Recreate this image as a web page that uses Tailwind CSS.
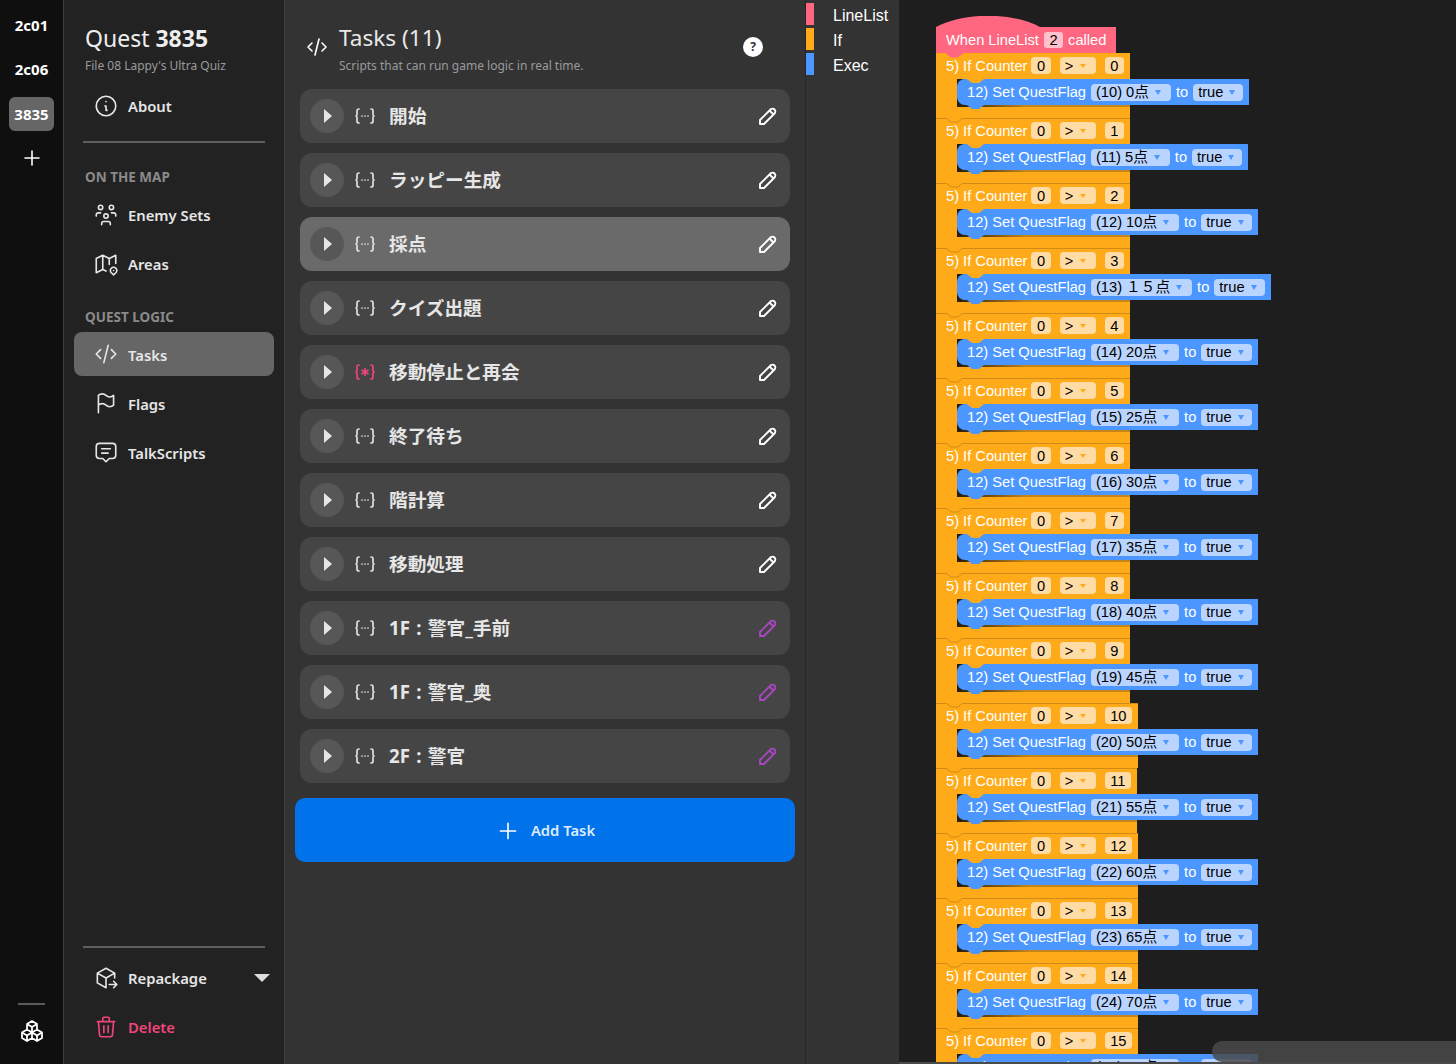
<!DOCTYPE html>
<html lang="ja">

<head>
    <meta charset="UTF-8">
    <title>Quest 3835</title>
    <script src="https://cdn.jsdelivr.net/npm/@tailwindcss/browser@4"></script>
</head>

<body class="bg-[#1e1e1e] overflow-hidden">

<!-- Icon sprites -->
<svg class="hidden">
    <symbol id="i-info" viewBox="0 0 24 24"><path d="M3 12a9 9 0 1 0 18 0a9 9 0 0 0 -18 0M12 8h.01M11 12h1v4h1"/></symbol>
    <symbol id="i-users" viewBox="0 0 24 24"><path d="M10 13a2 2 0 1 0 4 0a2 2 0 0 0 -4 0M8 21v-1a2 2 0 0 1 2 -2h4a2 2 0 0 1 2 2v1M15 5a2 2 0 1 0 4 0a2 2 0 0 0 -4 0M17 10h2a2 2 0 0 1 2 2v1M5 5a2 2 0 1 0 4 0a2 2 0 0 0 -4 0M3 13v-1a2 2 0 0 1 2 -2h2"/></symbol>
    <symbol id="i-map" viewBox="0 0 24 24"><path d="M12 18.5l-3 -1.5l-6 3v-13l6 -3l6 3l6 -3v7.5M9 4v13M15 7v5.5M21.121 20.121a3 3 0 1 0 -4.242 0c.418 .419 1.125 1.045 2.121 1.879c1.051 -.89 1.759 -1.516 2.121 -1.879zM19 18v.01"/></symbol>
    <symbol id="i-code" viewBox="0 0 24 24"><path d="M7 8l-4 4l4 4M17 8l4 4l-4 4M14 4l-4 16"/></symbol>
    <symbol id="i-flag" viewBox="0 0 24 24"><path d="M5 5a5 5 0 0 1 7 0a5 5 0 0 0 7 0v9a5 5 0 0 1 -7 0a5 5 0 0 0 -7 0v-9zM5 21v-7"/></symbol>
    <symbol id="i-message" viewBox="0 0 24 24"><path d="M8 9h8M8 13h6M9 18h-3a3 3 0 0 1 -3 -3v-8a3 3 0 0 1 3 -3h12a3 3 0 0 1 3 3v8a3 3 0 0 1 -3 3h-3l-3 3l-3 -3z"/></symbol>
    <symbol id="i-package" viewBox="0 0 24 24"><path d="M12 21l-8 -4.5v-9l8 -4.5l8 4.5v4.5M12 12l8 -4.5M12 12v9M12 12l-8 -4.5M15 18h7M19 15l3 3l-3 3"/></symbol>
    <symbol id="i-trash" viewBox="0 0 24 24"><path d="M4 7h16M10 11v6M14 11v6M5 7l1 12a2 2 0 0 0 2 2h8a2 2 0 0 0 2 -2l1 -12M9 7v-3a1 1 0 0 1 1 -1h4a1 1 0 0 1 1 1v3"/></symbol>
    <symbol id="i-packages" viewBox="0 0 24 24"><path d="M7 16.5l-5 -3l5 -3l5 3v5.5l-5 3zM2 13.5v5.5l5 3M7 16.545l5 -3.03M17 16.5l-5 -3l5 -3l5 3v5.5l-5 3zM12 19l5 3M17 16.5l5 -3M12 13.5v-5.5l-5 -3l5 -3l5 3v5.5M7 5.03v5.455M12 8l5 -3"/></symbol>
    <symbol id="i-plus" viewBox="0 0 24 24"><path d="M12 5v14M5 12h14"/></symbol>
    <symbol id="i-pencil" viewBox="0 0 24 24"><path d="M4 20h4l10.5 -10.5a2.828 2.828 0 1 0 -4 -4l-10.5 10.5v4M13.5 6.5l4 4"/></symbol>
    <symbol id="i-dots" viewBox="0 0 24 24"><path d="M15 12h.01M12 12h.01M9 12h.01M6 19a2 2 0 0 1 -2 -2v-4l-1 -1l1 -1v-4a2 2 0 0 1 2 -2M18 19a2 2 0 0 0 2 -2v-4l1 -1l-1 -1v-4a2 2 0 0 0 -2 -2"/></symbol>
    <symbol id="i-star" viewBox="0 0 24 24"><path d="M12 12l3 -1.7M12 12v3.4M12 12l-3 -1.7M12 12l3 1.7M12 8.6v3.4M12 12l-3 1.7M6 19a2 2 0 0 1 -2 -2v-4l-1 -1l1 -1v-4a2 2 0 0 1 2 -2M18 19a2 2 0 0 0 2 -2v-4l1 -1l-1 -1v-4a2 2 0 0 0 -2 -2"/></symbol>
</svg>

<div class="flex h-[1064px] w-[1456px] overflow-hidden [stroke-linecap:round] [stroke-linejoin:round] font-[family-name:'Noto_Sans','Noto_Sans_CJK_JP',sans-serif]">

    <!-- Project rail -->
    <nav class="w-[64px] shrink-0 bg-[#0f0f0f] border-r border-[#3e3e3e] flex flex-col items-center text-white text-[15px] font-bold">
        <a class="mt-[4px] h-[43px] flex items-center">2c01</a>
        <a class="h-[44px] flex items-center">2c06</a>
        <a class="w-[45px] h-[34px] mt-[6px] flex items-center justify-center rounded-md bg-[#666666]">3835</a>
        <svg class="mt-[15px] w-[24px] h-[24px] fill-none stroke-white stroke-[1.6]"><use href="#i-plus"/></svg>
        <div class="mt-auto w-[27px] h-[2px] bg-[#5a5a5a]"></div>
        <svg class="mt-[14px] mb-[21px] w-[24px] h-[24px] fill-none stroke-white stroke-[1.8]"><use href="#i-packages"/></svg>
    </nav>

    <!-- Quest sidebar -->
    <aside class="w-[221px] shrink-0 bg-[#222222] border-r border-[#3e3e3e] flex flex-col px-[10px] text-[#e6e6e6]">
        <h1 class="ml-[11px] mt-[22px] text-[23px] leading-[33px] text-[#eeeeee]">Quest <b class="font-bold">3835</b></h1>
        <p class="ml-[11px] mt-[2px] text-[12px] leading-[17px] text-[#9a9a9a]">File 08 Lappy's Ultra Quiz</p>
        <a class="mt-[10px] h-[44px] flex items-center gap-[9px] pl-[19px] text-[14.8px] font-semibold"><svg class="w-[26px] h-[26px] fill-none stroke-current stroke-[1.5]"><use href="#i-info"/></svg>About</a>
        <div class="mx-[9px] mt-[13px] h-[2px] bg-[#5f5f5f]"></div>
        <h2 class="ml-[11px] mt-[25px] text-[13.5px] leading-[18px] font-bold text-[#8a8a8a]">ON THE MAP</h2>
        <div class="mt-[7px] flex flex-col gap-[5px] text-[14.8px] font-semibold">
            <a class="h-[44px] flex items-center gap-[9px] pl-[19px]"><svg class="w-[26px] h-[26px] fill-none stroke-current stroke-[1.5]"><use href="#i-users"/></svg>Enemy Sets</a>
            <a class="h-[44px] flex items-center gap-[9px] pl-[19px]"><svg class="w-[26px] h-[26px] fill-none stroke-current stroke-[1.5]"><use href="#i-map"/></svg>Areas</a>
        </div>
        <h2 class="ml-[11px] mt-[22px] text-[13.5px] leading-[18px] font-bold text-[#8a8a8a]">QUEST LOGIC</h2>
        <div class="mt-[6px] flex flex-col gap-[5px] text-[14.8px] font-semibold">
            <a class="h-[44px] pt-[2px] flex items-center gap-[9px] pl-[19px] rounded-lg bg-[#666666]"><svg class="-mt-[2px] w-[26px] h-[26px] fill-none stroke-current stroke-[1.5]"><use href="#i-code"/></svg>Tasks</a>
            <a class="h-[44px] pt-[2px] flex items-center gap-[9px] pl-[19px]"><svg class="-mt-[2px] w-[26px] h-[26px] fill-none stroke-current stroke-[1.5]"><use href="#i-flag"/></svg>Flags</a>
            <a class="h-[44px] pt-[2px] flex items-center gap-[9px] pl-[19px]"><svg class="-mt-[2px] w-[26px] h-[26px] fill-none stroke-current stroke-[1.5]"><use href="#i-message"/></svg>TalkScripts</a>
        </div>
        <div class="mx-[9px] mt-auto h-[2px] bg-[#5f5f5f]"></div>
        <div class="mt-[8px] mb-[15px] flex flex-col gap-[5px] text-[14.8px] font-semibold">
            <a class="h-[44px] flex items-center gap-[9px] pl-[19px]"><svg class="w-[26px] h-[26px] fill-none stroke-current stroke-[1.5]"><use href="#i-package"/></svg>Repackage<span class="ml-auto mr-[4px] border-x-[8px] border-t-[8px] border-x-transparent border-t-[#dddddd]"></span></a>
            <a class="h-[44px] flex items-center gap-[9px] pl-[19px] text-[#f0457a]"><svg class="w-[26px] h-[26px] fill-none stroke-current stroke-[1.5]"><use href="#i-trash"/></svg>Delete</a>
        </div>
    </aside>

    <!-- Task list -->
    <section class="w-[521px] shrink-0 bg-[#333333] border-r border-[#262626] px-[10px]">
        <header class="h-[89px] pt-[22px] flex items-start relative">
            <svg class="ml-[10px] mt-[13px] w-[24px] h-[24px] fill-none stroke-white stroke-[1.6]"><use href="#i-code"/></svg>
            <div class="ml-[10px]">
                <h2 class="text-[22.6px] leading-[32px] text-[#e8e8e8]">Tasks (11)</h2>
                <p class="mt-[3px] text-[12px] leading-[17px] text-[#9a9a9a]">Scripts that can run game logic in real time.</p>
            </div>
            <span class="absolute left-[448px] top-[37px] w-[20px] h-[20px] rounded-full bg-white text-[#333333] text-[12px] font-bold flex items-center justify-center">?</span>
        </header>
        <div id="tasks" class="flex flex-col gap-[10px] px-[5px]"></div>
        <button class="mt-[15px] pt-[1px] w-[500px] h-[64px] rounded-[10px] bg-[#0073ea] flex items-center justify-center gap-[10px] text-[14.8px] font-semibold text-[#dcecff]">
            <svg class="w-[26px] h-[26px] fill-none stroke-white stroke-[1.5]"><use href="#i-plus"/></svg>
            Add Task
        </button>
    </section>

    <!-- Block toolbox -->
    <div class="w-[93px] shrink-0 bg-[#333333] pt-[3px] flex flex-col gap-[3px] text-white text-[16px] font-[family-name:'Liberation_Sans',sans-serif]">
        <div class="h-[22px] flex items-center gap-[19px]"><span class="w-[8px] h-full bg-[#ff6680]"></span><span class="mt-[3px]">LineList</span></div>
        <div class="h-[22px] flex items-center gap-[19px]"><span class="w-[8px] h-full bg-[#ffab19]"></span><span class="mt-[3px]">If</span></div>
        <div class="h-[22px] flex items-center gap-[19px]"><span class="w-[8px] h-full bg-[#4c97ff]"></span><span class="mt-[3px]">Exec</span></div>
    </div>

    <!-- Block workspace -->
    <main class="relative flex-1 overflow-hidden bg-[#1e1e1e] pl-[37px] pt-[27px] text-white text-[14.67px] font-[family-name:'Liberation_Sans','Noto_Sans_CJK_JP',sans-serif]">
        <div class="relative w-fit h-[26px] pl-[10px] pr-[10px] flex items-center gap-[3px] bg-[#ff6680] whitespace-nowrap">
            <svg class="absolute left-0 top-[-11px] w-[104px] h-[11px]" viewBox="0 0 104 11"><path d="M0 11C28 -4 76 -4 104 11Z" fill="#ff6680"/></svg>
            When LineList
            <span class="ml-[2px] h-[16px] px-[5.5px] rounded-[3px] bg-[#ffc2cc] text-black flex items-center">2</span>
            <span class="ml-[2px]">called</span>
        </div>
        <div id="blocks"></div>
        <!-- Scrollbar handle -->
        <div class="absolute left-[313px] top-[1041px] w-[244px] h-[21px] rounded-l-[10px] bg-[#4a4a4a]/85 z-20"></div>
        <div class="absolute left-0 bottom-0 w-full h-[2px] bg-[#4a4a4a] z-20"></div>
    </main>
</div>

<script>
    const tasks = [
        ["開始"], ["ラッピー生成"], ["採点", "active"], ["クイズ出題"], ["移動停止と再会", "star"],
        ["終了待ち"], ["階計算"], ["移動処理"], ["1F : 警官_手前", "purple"], ["1F : 警官_奥", "purple"], ["2F : 警官", "purple"]
    ];
    document.getElementById("tasks").innerHTML = tasks.map(([name, kind]) => `
        <div class="h-[54px] rounded-xl flex items-center pl-[10px] pr-[10px] ${kind === "active" ? "bg-[#6a6a6a]" : "bg-[#454545]"}">
            <span class="w-[34px] h-[34px] rounded-full flex items-center justify-center bg-[#575757]">
                <span class="ml-[2px] border-y-[7px] border-l-[8px] border-y-transparent border-l-[#e6e6e6]"></span>
            </span>
            <svg class="ml-[9px] w-[24px] h-[24px] fill-none stroke-[1.7] ${kind === "star" ? "stroke-[#f0457a]" : "stroke-[#e0e0e0]"}"><use href="${kind === "star" ? "#i-star" : "#i-dots"}"/></svg>
            <span class="ml-[12px] text-[18.67px] font-bold text-[#e6e6e6] [word-spacing:1.5px]">${name}</span>
            <svg class="ml-auto w-[24px] h-[24px] fill-none stroke-[1.9] ${kind === "purple" ? "stroke-[#a845c0]" : "stroke-white"}"><use href="#i-pencil"/></svg>
        </div>`).join("");

    const points = ["0点", "5点", "10点", "１５点", "20点", "25点", "30点", "35点", "40点", "45点", "50点", "55点", "60点", "65点", "70点", "75点"];
    document.getElementById("blocks").innerHTML = points.map((label, i) => `
        <div class="relative w-fit whitespace-nowrap">
            <div class="h-[26px] pb-[1px] pl-[10px] pr-[6px] flex items-center bg-[#ffab19] ${i === 0 ? "" : "shadow-[inset_0_1px_0_#cf8b17]"}">
                5) If Counter
                <span class="ml-[4px] h-[17px] px-[5.5px] rounded-[4px] bg-[#ffdca6] text-black flex items-center">0</span>
                <span class="ml-[9px] h-[17px] w-[36px] pl-[5px] rounded-[4px] bg-[#ffdca6] text-black flex items-center gap-[7px]">&gt;<span class="border-x-[3px] border-t-[4px] border-x-transparent border-t-[#ffab19]"></span></span>
                <span class="ml-[9px] h-[17px] px-[5.5px] rounded-[4px] bg-[#ffdca6] text-black flex items-center">${i}</span>
            </div>
            <svg class="absolute left-[10px] top-0 w-[17px] h-[5px]" viewBox="0 0 17 5"><path d="M0 0L5 4H12L17 0" fill="${i === 0 ? "#ff6680" : "#ffab19"}" stroke="${i === 0 ? "#ff6680" : "#cf8b17"}"/></svg>
            <div class="w-0 flex h-[26px]">
                <div class="w-[21px] shrink-0 bg-[#ffab19]"></div>
                <div class="relative z-10 shrink-0 h-[26px] pl-[10px] pr-[6px] flex items-center rounded-l-[8px] bg-[#4c97ff]">
                    <svg class="absolute left-[10px] top-0 w-[17px] h-[5px]" viewBox="0 0 17 5"><path d="M0 0L5 4H12L17 0Z" fill="#ffab19"/></svg>
                    <svg class="absolute left-[10px] top-[26px] w-[17px] h-[5px]" viewBox="0 0 17 5"><path d="M0 0L5 4H12L17 0Z" fill="#4c97ff"/></svg>
                    12) Set QuestFlag
                    <span class="ml-[5px] h-[17px] pl-[5px] pr-[10px] rounded-[4px] bg-[#b9d4ff] text-black flex items-center gap-[6px]">(${i + 10}) ${label}<span class="border-x-[3.5px] border-t-[5px] border-x-transparent border-t-[#4c97ff]"></span></span>
                    <span class="ml-[5px]">to</span>
                    <span class="ml-[5px] h-[17px] pl-[5px] pr-[8px] rounded-[4px] bg-[#b9d4ff] text-black flex items-center gap-[6px]">true<span class="border-x-[3.5px] border-t-[5px] border-x-transparent border-t-[#4c97ff]"></span></span>
                </div>
            </div>
            <div class="h-[13px] bg-[#ffab19]">
                <div class="ml-[21px] h-[2px] bg-gradient-to-r from-[#2a1e08] to-[#c6851a] to-40%"></div>
            </div>
        </div>`).join("");
</script>

</body>

</html>
